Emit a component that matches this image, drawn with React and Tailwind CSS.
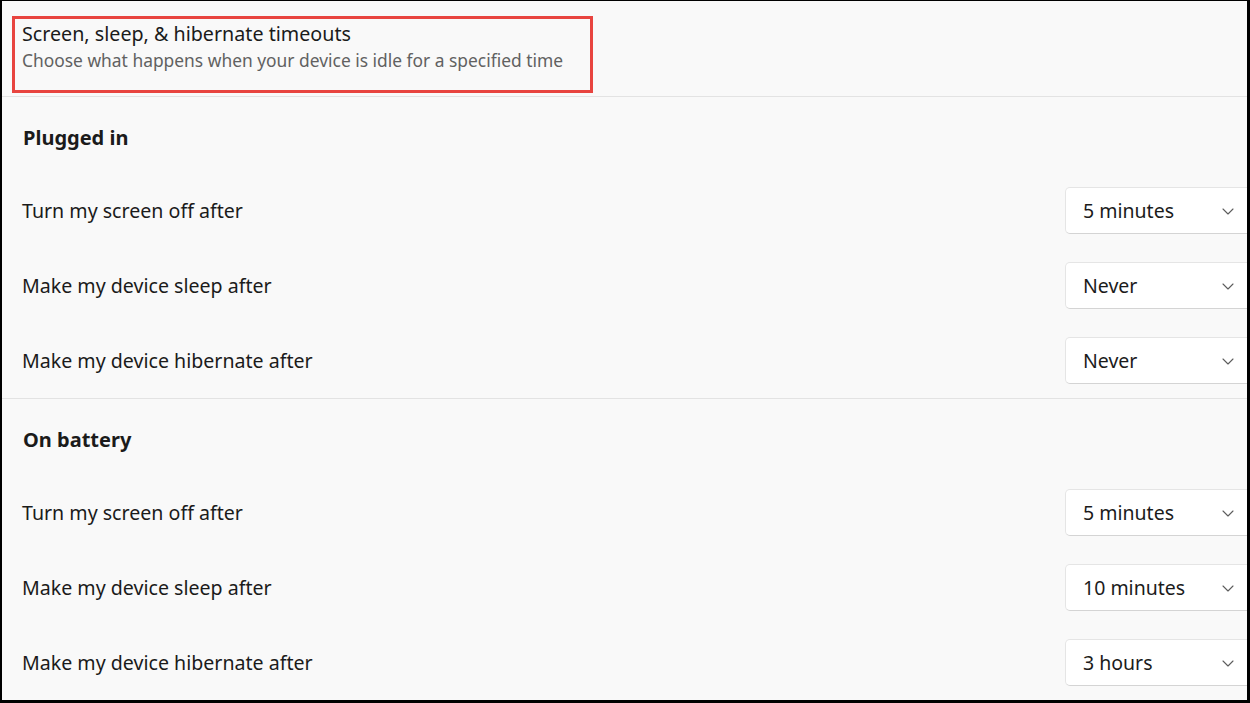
import React from 'react';

const sections = [
  {
    title: 'Plugged in',
    rows: [
      { label: 'Turn my screen off after', value: '5 minutes' },
      { label: 'Make my device sleep after', value: 'Never' },
      { label: 'Make my device hibernate after', value: 'Never' },
    ],
  },
  {
    title: 'On battery',
    rows: [
      { label: 'Turn my screen off after', value: '5 minutes' },
      { label: 'Make my device sleep after', value: '10 minutes' },
      { label: 'Make my device hibernate after', value: '3 hours' },
    ],
  },
];

const Chevron = () => (
  <svg width="14" height="14" viewBox="0 0 14 14" fill="none" className="text-[#5c5c5c]">
    <path d="M2 5 L7 10 L12 5" stroke="currentColor" strokeWidth="1.1" strokeLinecap="round" strokeLinejoin="round" />
  </svg>
);

const Dropdown = ({ value }) => (
  <div className="w-[200px] h-[47px] shrink-0 flex items-center justify-between pl-[17px] pr-[29px] bg-white border border-[#e5e5e5] border-b-[#d4d4d4] rounded-[5px]">
    <span className="text-[19.5px] text-[#1b1b1b]">{value}</span>
    <Chevron />
  </div>
);

const Section = ({ section, last }) => (
  <div className={last ? '' : 'border-b border-[#e3e3e3]'}>
    <div className="h-[76px] flex items-center pl-[21px] pt-[5px]">
      <h2 className="text-[20px] font-bold text-[#1b1b1b]">{section.title}</h2>
    </div>
    {section.rows.map((row, i) => (
      <div key={i} className="h-[75px] flex items-center justify-between pl-[20px]">
        <span className="text-[19.6px] text-[#1b1b1b]">{row.label}</span>
        <div className="w-[182px] overflow-hidden flex">
          <Dropdown value={row.value} />
        </div>
      </div>
    ))}
  </div>
);

export default function App() {
  return (
    <div className="w-[1250px] h-[703px] bg-black overflow-hidden" style={{ fontFamily: '"Noto Sans", "Open Sans", sans-serif' }}>
      <div className="ml-[2px] mr-[3px] mt-[1px] h-[699px] bg-[#f9f9f9] overflow-hidden">
        <div className="h-[96px] border-b border-[#e3e3e3] pl-[10px] pt-[15px]">
          <div className="w-[581px] h-[77px] border-[3px] border-[#e8443f] pl-[7px] pt-[2px]">
            <div className="text-[19.7px] leading-[26px] text-[#1b1b1b]">Screen, sleep, &amp; hibernate timeouts</div>
            <div className="text-[17.4px] leading-[24px] text-[#616161] mt-[1px]">Choose what happens when your device is idle for a specified time</div>
          </div>
        </div>
        {sections.map((s, i) => (
          <Section key={i} section={s} last={i === sections.length - 1} />
        ))}
      </div>
    </div>
  );
}
